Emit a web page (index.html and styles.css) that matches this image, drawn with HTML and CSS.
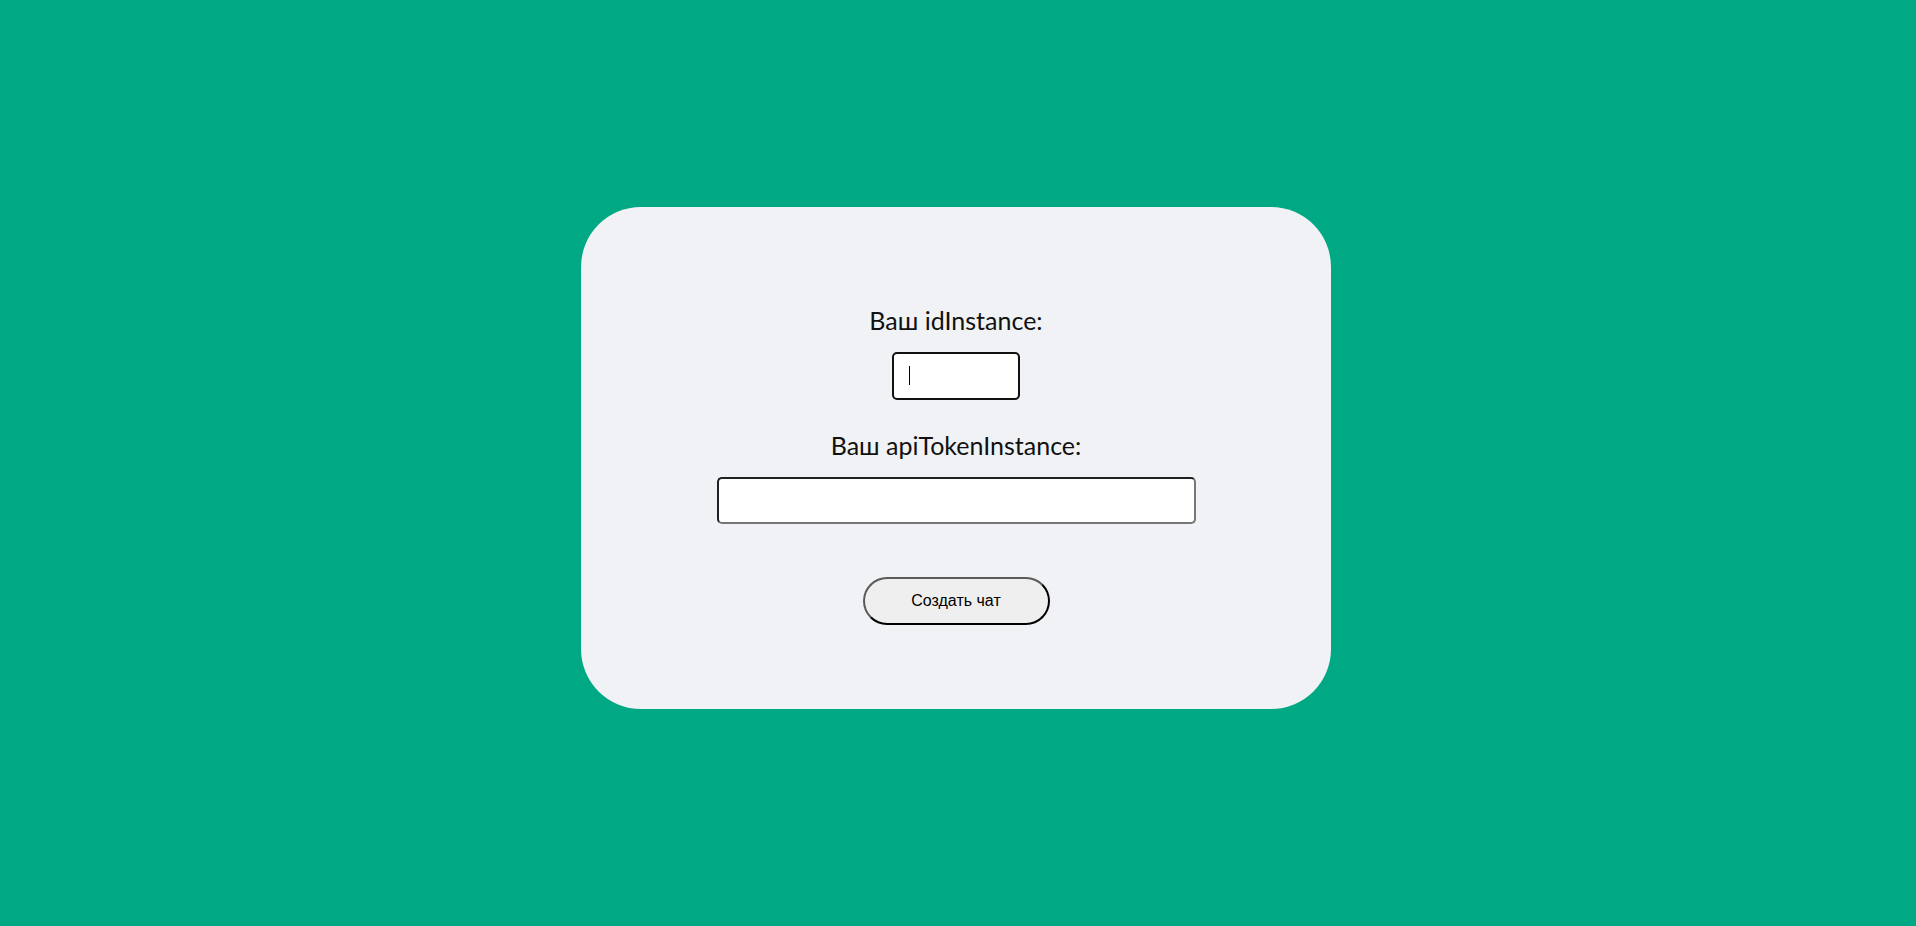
FILE: index.html
```html
<!DOCTYPE html>
<html lang="ru">
<head>
<meta charset="utf-8">
<title>Вход</title>
<link rel="stylesheet" href="styles.css">
</head>
<body>
<main class="page">
  <form class="card">
    <label class="label" for="id">Ваш idInstance:</label>
    <div class="field-wrap">
      <input class="input input-id" id="id" type="text">
      <span class="caret"></span>
    </div>
    <label class="label label-token" for="token">Ваш apiTokenInstance:</label>
    <input class="input input-token" id="token" type="text">
    <button class="btn" type="button">Создать чат</button>
  </form>
</main>
</body>
</html>
```
FILE: styles.css
```css
html, body {
  margin: 0;
  padding: 0;
  background: #00a884;
}
.page {
  min-height: 926px;
  box-sizing: border-box;
  display: flex;
  align-items: center;
  justify-content: center;
  padding: 0 4px 10px 0;
}
.card {
  width: 750px;
  height: 502px;
  box-sizing: border-box;
  background: #f0f2f5;
  border-radius: 60px;
  display: flex;
  flex-direction: column;
  align-items: center;
  padding-top: 98px;
}
.label {
  font-family: Lato, "Noto Sans", sans-serif;
  font-size: 25px;
  line-height: 30px;
  color: #111;
  display: block;
}
.label-token {
  margin-top: 30px;
}
.field-wrap {
  position: relative;
  margin-top: 17px;
}
.input {
  display: block;
  box-sizing: border-box;
  height: 48px;
  background: #fff;
  border-radius: 5px;
  outline: none;
  margin: 0;
  padding: 0 10px;
  font-family: "Liberation Sans", Arial, sans-serif;
  font-size: 16px;
}
.input-id {
  width: 128px;
  border: 2px solid #111;
}
.caret {
  position: absolute;
  left: 17px;
  top: 14px;
  width: 1px;
  height: 19px;
  background: #000;
}
.input-token {
  width: 479px;
  height: 47px;
  margin-top: 17px;
  border-width: 2px;
  border-style: inset;
  border-color: #767676;
}
.btn {
  margin-top: 53px;
  width: 187px;
  height: 48px;
  box-sizing: border-box;
  border-radius: 24px;
  background: #efefef;
  border: 2px solid;
  border-color: #5a5a5a #000 #000 #5a5a5a;
  font-family: "Liberation Sans", Arial, sans-serif;
  font-size: 16px;
  color: #000;
  padding: 0;
}
```
